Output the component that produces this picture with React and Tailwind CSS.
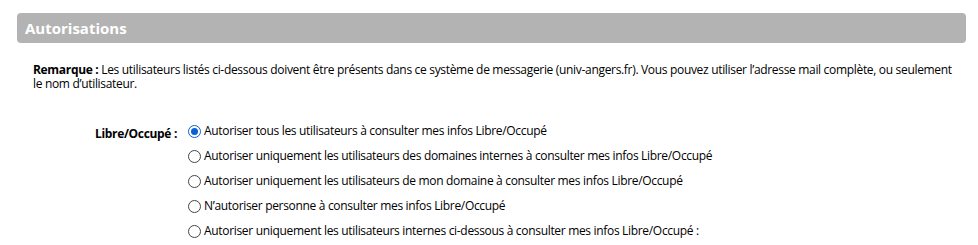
import React from "react";

const options = [
  "Autoriser tous les utilisateurs à consulter mes infos Libre/Occupé",
  "Autoriser uniquement les utilisateurs des domaines internes à consulter mes infos Libre/Occupé",
  "Autoriser uniquement les utilisateurs de mon domaine à consulter mes infos Libre/Occupé",
  "N’autoriser personne à consulter mes infos Libre/Occupé",
  "Autoriser uniquement les utilisateurs internes ci-dessous à consulter mes infos Libre/Occupé :",
];

function Radio({ checked }) {
  return (
    <span
      className={
        checked
          ? "flex h-[13px] w-[13px] shrink-0 items-center justify-center rounded-full border border-[#0b5fd0] bg-white"
          : "flex h-[13px] w-[13px] shrink-0 items-center justify-center rounded-full border border-[#444] bg-white"
      }
    >
      {checked && <span className="h-[7px] w-[7px] rounded-full bg-[#0b5fd0]" />}
    </span>
  );
}

export default function App() {
  return (
    <div
      className="h-[245px] w-[978px] overflow-hidden bg-white pl-[17px] pr-[12px] pt-[13px] text-[12px] tracking-[-0.32px] text-black"
      style={{ fontFamily: '"Open Sans", "Noto Sans", sans-serif' }}
    >
      <div className="flex h-[30px] items-center rounded-[4px] bg-[#b3b3b3] pl-[8px] text-[15px] font-bold tracking-normal text-white">
        Autorisations
      </div>
      <div className="pl-[16px] pr-[10px] pt-[20px] leading-[14px]">
        <span className="font-bold">Remarque :</span> Les utilisateurs listés ci-dessous doivent être présents dans ce système de messagerie (univ-angers.fr). Vous pouvez utiliser l’adresse mail complète, ou seulement le nom d’utilisateur.
      </div>
      <div className="mt-[30px] flex">
        <div className="w-[171px] pt-[3px] pr-[11px] text-right font-bold leading-[20px]">Libre/Occupé :</div>
        <div className="flex flex-col gap-[5px]">
          {options.map((o, i) => (
            <label key={i} className="flex h-[20px] items-center gap-[3px]">
              <Radio checked={i === 0} />
              <span>{o}</span>
            </label>
          ))}
        </div>
      </div>
    </div>
  );
}
